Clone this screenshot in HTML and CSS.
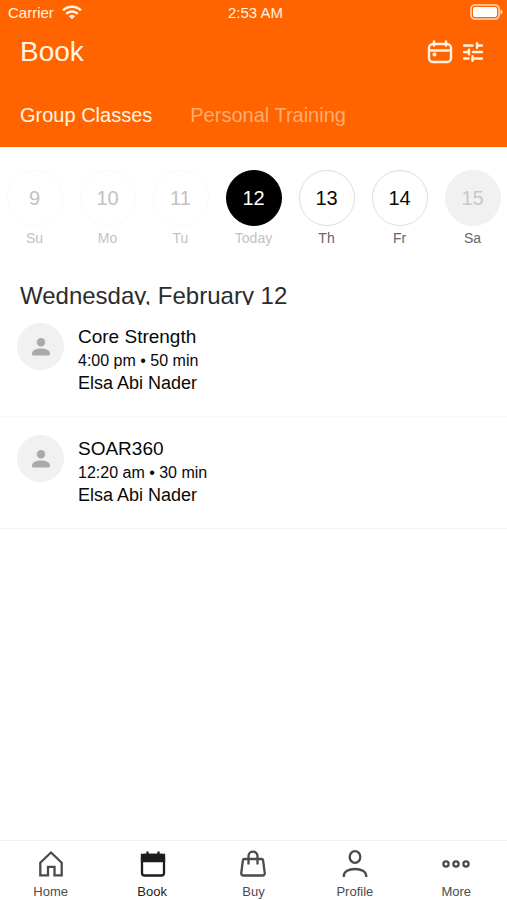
FILE: index.html
```html
<!DOCTYPE html>
<html lang="en">
<head>
<meta charset="utf-8">
<meta name="viewport" content="width=device-width, initial-scale=1">
<title>Book</title>
<link rel="stylesheet" href="styles.css">
</head>
<body>
<div class="app">
  <header class="header">
    <div class="status">
      <span class="carrier">Carrier
        <svg width="20" height="15" viewBox="0 0 20 15" fill="none" stroke="currentColor" stroke-width="2.500"><path d="M1 5.400a13.200 13.200 0 0 1 18 0M4.200 8.800a8.600 8.600 0 0 1 11.600 0"/><path d="M10 14.200 6.900 11.200a4.600 4.600 0 0 1 6.200 0z" fill="currentColor" stroke="none"/></svg>
      </span>
      <span>2:53 AM</span>
      <svg class="battery" width="33" height="16" viewBox="0 0 33 16"><rect x="1" y="1" width="28" height="14" rx="4" fill="none" stroke="#ffd9b8" stroke-width="1.600"/><rect x="3" y="3" width="24" height="10" rx="2" fill="#fff"/><path d="M30.500 5.300q2 .7 2 2.700t-2 2.700z" fill="#ffd9b8"/></svg>
    </div>
    <div class="titlebar">
      <h1>Book</h1>
      <div class="actions">
        <button type="button" aria-label="Calendar"><svg width="26" height="24" viewBox="0 0 26 24" fill="none" stroke="currentColor" stroke-width="2.400"><rect x="2" y="4" width="22" height="18" rx="4"/><path d="M2 10.500h22M7 1.500v4M19 1.500v4" stroke-linecap="round"/><circle cx="7.500" cy="14.500" r="2" fill="currentColor" stroke="none"/></svg></button>
        <button type="button" aria-label="Filters"><svg width="20" height="20" viewBox="0 0 20 20" fill="none" stroke="currentColor" stroke-width="2.400" stroke-linecap="round"><path d="M1 3.500h8.500M14 1.200v4.600M14 3.500h5M1 10h5M6 7.700v4.600M10 10h9M1 16.500h4.500M9.500 14.200v4.600M9.500 16.500H19"/></svg></button>
      </div>
    </div>
    <nav class="tabs" aria-label="Class type">
      <a href="#group" aria-current="page">Group Classes</a>
      <a href="#personal">Personal Training</a>
    </nav>
  </header>
  <main>
    <div class="week">
      <button type="button" class="day past"><span class="num">9</span><span>Su</span></button>
      <button type="button" class="day past"><span class="num">10</span><span>Mo</span></button>
      <button type="button" class="day past"><span class="num">11</span><span>Tu</span></button>
      <button type="button" class="day today"><span class="num">12</span><span>Today</span></button>
      <button type="button" class="day"><span class="num">13</span><span>Th</span></button>
      <button type="button" class="day"><span class="num">14</span><span>Fr</span></button>
      <button type="button" class="day closed"><span class="num">15</span><span>Sa</span></button>
    </div>
    <h2>Wednesday, February 12</h2>
    <ul class="classes">
      <li>
        <span class="avatar"><svg width="18" height="18" viewBox="0 0 18 18" fill="currentColor"><circle cx="9" cy="4.300" r="4.200"/><path d="M1.500 17.500Q0 17.500 0 16v-.5C0 12 4.500 10.600 9 10.600s9 1.400 9 4.900v.5q0 1.500-1.500 1.500z"/></svg></span>
        <div><h3>Core Strength</h3><p class="time">4:00 pm • 50 min</p><p class="coach">Elsa Abi Nader</p></div>
      </li>
      <li>
        <span class="avatar"><svg width="18" height="18" viewBox="0 0 18 18" fill="currentColor"><circle cx="9" cy="4.300" r="4.200"/><path d="M1.500 17.500Q0 17.500 0 16v-.5C0 12 4.500 10.600 9 10.600s9 1.400 9 4.900v.5q0 1.500-1.500 1.500z"/></svg></span>
        <div><h3>SOAR360</h3><p class="time">12:20 am • 30 min</p><p class="coach">Elsa Abi Nader</p></div>
      </li>
    </ul>
  </main>
  <nav class="bottom" aria-label="Main">
    <a href="#home"><svg width="28" height="28" viewBox="0 0 28 28"><path d="M3.300 25.300V12.700L14 2.500l10.700 10.200v12.600h-7.200v-8.500h-6.500v8.500z"/></svg>Home</a>
    <a href="#book" aria-current="page"><svg width="28" height="28" viewBox="0 0 28 28"><rect x="4" y="5" width="22" height="20.500" rx="2.500"/><path d="M4 5h22v6H4z" fill="currentColor"/><path d="M9.500 1.500v4M20.500 1.500v4"/></svg>Book</a>
    <a href="#buy"><svg width="28" height="28" viewBox="0 0 28 28"><path d="M5.500 9h17c1 0 1.500.5 1.600 1.300l1.600 12.400c.2 1.700-.6 2.800-2.200 2.800h-19c-1.600 0-2.400-1.100-2.200-2.800l1.600-12.400C4 9.500 4.500 9 5.500 9zM9.500 14.500V6.200c0-6 9-6 9 0v8.300"/></svg>Buy</a>
    <a href="#profile"><svg width="28" height="28" viewBox="0 0 28 28"><ellipse cx="14" cy="7" rx="5.300" ry="5.800"/><path d="M2.800 27v-1c0-4.500 5-7 11.200-7s11.200 2.500 11.200 7v1"/></svg>Profile</a>
    <a href="#more"><svg width="28" height="28" viewBox="0 0 28 28"><circle cx="4" cy="14" r="2.600"/><circle cx="14" cy="14" r="2.600"/><circle cx="24" cy="14" r="2.600"/></svg>More</a>
  </nav>
</div>
</body>
</html>
```
FILE: styles.css
```css
* { box-sizing: border-box; }
body, h1, h2, h3, p, ul { margin: 0; padding: 0; font-weight: 400; }
body { font-family: "Liberation Sans", Arial, sans-serif; background: #fff; color: #080808; }
button { border: 0; padding: 0; background: none; font: inherit; color: inherit; }
a { color: inherit; text-decoration: none; }
svg { display: block; }

.app { min-height: 100vh; display: flex; flex-direction: column; }
main { flex: 1; overflow: hidden; }

.header { background: #ff6400; color: #fff4e2; padding-bottom: 16px; }
.status {
  display: grid; grid-template-columns: 1fr auto 1fr; align-items: center;
  height: 24px; padding: 0 4px 0 8px; font-size: 15px;
}
.carrier { display: flex; align-items: center; gap: 8px; }
.battery { justify-self: end; }
.titlebar { display: flex; align-items: center; justify-content: space-between; height: 56px; padding: 0 24px 0 20px; }
h1 { font-size: 28px; line-height: 56px; }
.actions { display: flex; align-items: center; gap: 10px; }
.tabs { display: flex; align-items: center; gap: 38px; height: 51px; padding: 20px 20px 0; font-size: 20px; }
.tabs a { color: #ffac70; }
.tabs a[aria-current] { color: #fff4e2; }

.week { display: grid; grid-template-columns: repeat(7, 1fr); margin: 23px -2px 0; }
.day { display: flex; flex-direction: column; align-items: center; gap: 2px; font-size: 14px; line-height: 20px; color: #666; }
.num {
  display: grid; place-items: center; width: 56px; height: 56px;
  border: 1px solid #ddd; border-radius: 50%; font-size: 20px; color: #080808;
}
.past, .today { color: #c2c2c2; }
.past .num { border-color: #fafafa; color: #c2c2c2; }
.today .num { background: #000; border-color: #000; color: #fff; }
.closed .num { background: #f1f1f1; border-color: #f1f1f1; color: #c8c8c8; }

h2 { height: 23px; margin: 34px 20px 0; overflow: hidden; font-size: 24px; line-height: 28px; color: #2c2c2c; }
.classes { list-style: none; }
.classes li { display: flex; gap: 14px; padding: 18px 17px 22px; border-bottom: 1px solid #f3f3f3; }
.classes li:first-child { border-color: #f9f9f9; }
.avatar { display: grid; place-items: center; width: 47px; height: 47px; border-radius: 50%; background: #f1f1f1; color: #aaa; }
h3 { font-size: 19px; line-height: 27px; }
.time { font-size: 16px; line-height: 22px; }
.coach { font-size: 18px; line-height: 22px; }

.bottom { display: grid; grid-template-columns: repeat(5, 1fr); border-top: 1px solid #f1f1f1; padding: 9px 0 0; }
.bottom a { display: flex; flex-direction: column; align-items: center; gap: 6px; font-size: 13px; line-height: 16px; color: #4b4b4d; }
.bottom a[aria-current] { color: #1d1d20; }
.bottom svg { fill: none; stroke: currentColor; stroke-width: 2.3; }
```
